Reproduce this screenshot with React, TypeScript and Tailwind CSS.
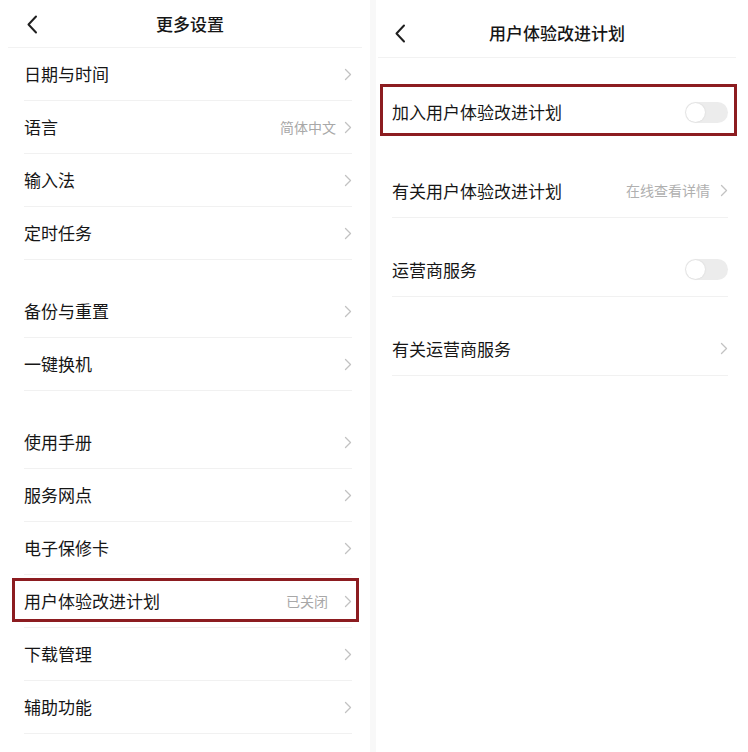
import { ReactNode } from 'react';

const font = { fontFamily: '"Noto Sans CJK SC", "Noto Sans", sans-serif' };

const Chevron = () => (
  <svg width="8" height="13" viewBox="0 0 8 13" className="shrink-0">
    <path d="M1.5 1.5 L6.5 6.5 L1.5 11.5" fill="none" stroke="#c2c2c2" strokeWidth="1.3" strokeLinecap="round" strokeLinejoin="round" />
  </svg>
);

const BackArrow = () => (
  <svg width="12" height="19" viewBox="0 0 12 19">
    <path d="M10 1.5 L2.5 9.5 L10 17.5" fill="none" stroke="#1f1f1f" strokeWidth="2" strokeLinecap="round" strokeLinejoin="round" />
  </svg>
);

const Toggle = () => (
  <div className="w-[43px] h-[21px] rounded-full bg-[#ececec] flex items-center px-[1px]">
    <div className="w-[19px] h-[19px] rounded-full bg-white shadow-[0_0_2px_rgba(0,0,0,0.12)]" />
  </div>
);

interface RowProps {
  label: string;
  value?: string;
  highlight?: boolean;
}

// left list row, 53px tall with a hairline under it
const LeftRow = ({ label, value, highlight }: RowProps) => (
  <div className="relative">
    {highlight && (
      <div className="absolute left-[12px] top-[3px] w-[347px] h-[44px] border-[3px] border-[#8c1c20]" />
    )}
    <div className="ml-6 mr-[18px] h-[53px] flex items-center justify-between border-b border-[#f1f1f1]">
      <span className="text-[17px] text-[#161616]">{label}</span>
      <div className="flex items-center">
        {value && (
          <span className={`text-[14px] text-[#a8a8a8] ${highlight ? 'mr-[16px]' : 'mr-[8px]'}`}>{value}</span>
        )}
        <Chevron />
      </div>
    </div>
  </div>
);

const Group = ({ children }: { children: ReactNode }) => <div className="flex flex-col">{children}</div>;

const RightRow = ({ label, right, highlight }: { label: string; right: ReactNode; highlight?: boolean }) => (
  <div className={`relative ${highlight ? 'pt-[27px]' : 'pt-[25px]'}`}>
    {highlight && (
      <div className="absolute left-[4px] top-[26px] w-[357px] h-[52px] border-[3px] border-[#8c1c20]" />
    )}
    <div className={`ml-4 mr-[20px] h-[54px] flex items-center justify-between ${highlight ? '' : 'border-b border-[#f1f1f1]'}`}>
      <span className="text-[17px] text-[#161616]">{label}</span>
      {right}
    </div>
  </div>
);

export default function App() {
  return (
    <div className="w-[748px] h-[752px] bg-white flex overflow-hidden" style={font}>
      <div className="w-[370px] flex flex-col">
        <div className="mx-2 h-[48px] border-b border-[#f2f2f2] relative flex items-center justify-center pl-[10px]">
          <div className="absolute left-[18px] top-[15px]">
            <BackArrow />
          </div>
          <span className="text-[17px] font-medium text-[#161616]">更多设置</span>
        </div>
        <Group>
          <LeftRow label="日期与时间" />
          <LeftRow label="语言" value="简体中文" />
          <LeftRow label="输入法" />
          <LeftRow label="定时任务" />
        </Group>
        <div className="h-[25px]" />
        <Group>
          <LeftRow label="备份与重置" />
          <LeftRow label="一键换机" />
        </Group>
        <div className="h-[25px]" />
        <Group>
          <LeftRow label="使用手册" />
          <LeftRow label="服务网点" />
          <LeftRow label="电子保修卡" />
          <LeftRow label="用户体验改进计划" value="已关闭" highlight />
          <LeftRow label="下载管理" />
          <LeftRow label="辅助功能" />
        </Group>
      </div>
      <div className="w-[6px] bg-[#f8f8f8]" />
      <div className="flex-1 flex flex-col">
        <div className="ml-[2px] mr-[12px] h-[58px] border-b border-[#f2f2f2] relative flex items-center justify-center pt-[8px]">
          <div className="absolute left-[16px] top-[24px]">
            <BackArrow />
          </div>
          <span className="text-[17px] font-medium text-[#161616]">用户体验改进计划</span>
        </div>
        <RightRow label="加入用户体验改进计划" right={<Toggle />} highlight />
        <RightRow
          label="有关用户体验改进计划"
          right={
            <div className="flex items-center gap-[10px]">
              <span className="text-[14px] text-[#b0b0b0]">在线查看详情</span>
              <Chevron />
            </div>
          }
        />
        <RightRow label="运营商服务" right={<Toggle />} />
        <RightRow label="有关运营商服务" right={<Chevron />} />
      </div>
    </div>
  );
}
